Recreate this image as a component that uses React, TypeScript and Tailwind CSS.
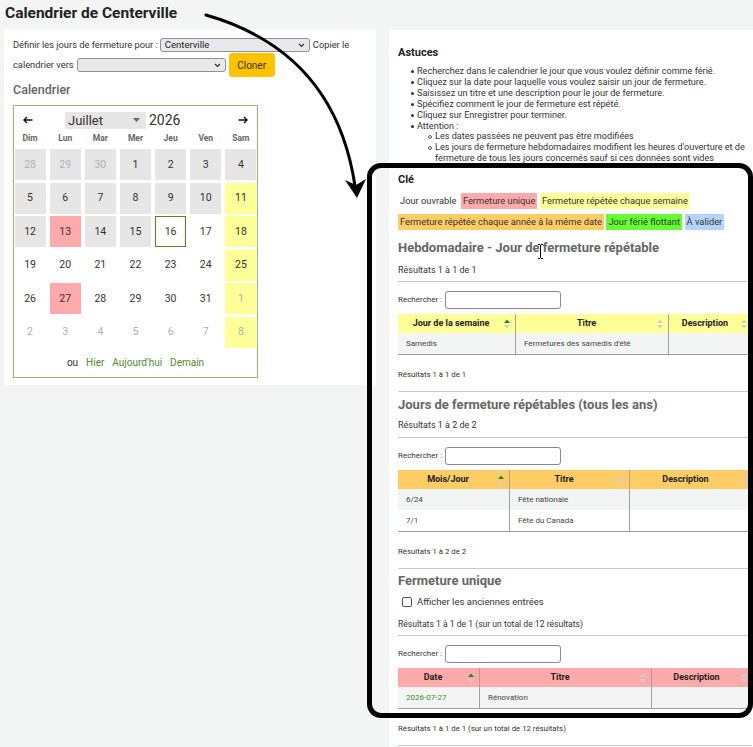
import React from 'react';

type Kind = 'past' | 'unique' | 'weekly' | 'open' | 'today';
type Day = { n: number; kind: Kind; dim?: boolean };

const d = (n: number, kind: Kind, dim = false): Day => ({ n, kind, dim });

const weekdays = ['Dim', 'Lun', 'Mar', 'Mer', 'Jeu', 'Ven', 'Sam'];

const weeks: Day[][] = [
  [d(28, 'past', true), d(29, 'past', true), d(30, 'past', true), d(1, 'past'), d(2, 'past'), d(3, 'past'), d(4, 'past')],
  [d(5, 'past'), d(6, 'past'), d(7, 'past'), d(8, 'past'), d(9, 'past'), d(10, 'past'), d(11, 'weekly')],
  [d(12, 'past'), d(13, 'unique'), d(14, 'past'), d(15, 'past'), d(16, 'today'), d(17, 'open'), d(18, 'weekly')],
  [d(19, 'open'), d(20, 'open'), d(21, 'open'), d(22, 'open'), d(23, 'open'), d(24, 'open'), d(25, 'weekly')],
  [d(26, 'open'), d(27, 'unique'), d(28, 'open'), d(29, 'open'), d(30, 'open'), d(31, 'open'), d(1, 'weekly', true)],
  [d(2, 'open', true), d(3, 'open', true), d(4, 'open', true), d(5, 'open', true), d(6, 'open', true), d(7, 'open', true), d(8, 'weekly', true)],
];

const dayStyle: Record<Kind, string> = {
  past: 'bg-[#e6e6e6]',
  unique: 'bg-[#ffaaaa]',
  weekly: 'bg-[#ffff99]',
  open: '',
  today: 'border border-[#4f8a10]',
};

function Chevron() {
  return (
    <svg width="7" height="5" viewBox="0 0 7 5" className="shrink-0">
      <polyline points="1,1 3.5,3.5 6,1" fill="none" stroke="#333" strokeWidth="1.2" />
    </svg>
  );
}

function FakeSelect({ value, className }: { value?: string; className: string }) {
  return (
    <div
      className={`flex h-[14px] items-center justify-between rounded-[3px] border border-[#8f8f9d] bg-[#e9e9ed] pl-[4px] pr-[4px] text-[9.5px] leading-none text-[#222] ${className}`}
    >
      <span>{value}</span>
      <Chevron />
    </div>
  );
}

function Arrow({ dir }: { dir: 'left' | 'right' }) {
  return (
    <svg width="10" height="8" viewBox="0 0 10 8" className="shrink-0">
      {dir === 'left' ? (
        <path d="M9.5 4H1M4 1L1 4l3 3" fill="none" stroke="#111" strokeWidth="1.4" />
      ) : (
        <path d="M0.5 4H9M6 1l3 3-3 3" fill="none" stroke="#111" strokeWidth="1.4" />
      )}
    </svg>
  );
}

function Calendar() {
  return (
    <div className="mt-[8px] w-[245px] border border-[#8dc26a] pb-[8px] pt-[5px]">
      {/* month navigation */}
      <div className="flex h-[18px] items-center">
        <div className="ml-[9px]">
          <Arrow dir="left" />
        </div>
        <div className="ml-[32px] flex h-[17px] w-[81px] items-center justify-between bg-[#e6e6e6] pl-[3px] pr-[6px]">
          <span className="text-[13px] leading-none text-[#333]">Juillet</span>
          <svg width="7" height="4" viewBox="0 0 7 4">
            <path d="M0 0h7L3.5 4z" fill="#666" />
          </svg>
        </div>
        <span className="ml-[3px] text-[14px] leading-none text-[#333]">2026</span>
        <div className="ml-auto mr-[9px]">
          <Arrow dir="right" />
        </div>
      </div>

      <div className="mx-auto mt-[3px] grid w-[242px] grid-cols-7 gap-x-[4px] text-center text-[8.5px] font-bold leading-[12px] text-[#666]">
        {weekdays.map((w) => (
          <span key={w}>{w}</span>
        ))}
      </div>

      <div className="mx-auto mt-[5px] grid w-[242px] grid-cols-7 gap-x-[4px] gap-y-[2.5px]">
        {weeks.flat().map((day, i) => (
          <div
            key={i}
            className={`flex h-[31px] items-center justify-center text-[10.5px] ${dayStyle[day.kind]} ${day.dim ? 'text-[#b0b0b0]' : 'text-[#333]'}`}
          >
            {day.n}
          </div>
        ))}
      </div>

      <div className="mt-[9px] flex justify-center gap-x-[8px] text-[10px] leading-[12px]">
        <span className="text-[#333]">ou</span>
        <span className="text-[#4a8f2a]">Hier</span>
        <span className="text-[#4a8f2a]">Aujourd'hui</span>
        <span className="text-[#4a8f2a]">Demain</span>
      </div>
    </div>
  );
}

function LeftPanel() {
  return (
    <div className="w-[372px] shrink-0 bg-white pb-[7px] pl-[9px] pt-[9px]">
      <div className="flex h-[14px] items-center text-[9.3px] text-[#333]">
        <span>Définir les jours de fermeture pour :</span>
        <FakeSelect value="Centerville" className="ml-[2px] w-[150px]" />
        <span className="ml-[3px]">Copier le</span>
      </div>
      <div className="mt-[1px] flex h-[24px] items-center text-[9.3px] text-[#333]">
        <span>calendrier vers</span>
        <FakeSelect className="ml-[3px] w-[149px]" />
        <button className="ml-[3px] h-[24px] w-[46px] rounded-[3px] bg-[#ffc300] text-[10px] text-[#333]">Cloner</button>
      </div>
      <h3 className="mt-[5px] text-[12.5px] font-medium leading-[15px] text-[#666]">Calendrier</h3>
      <Calendar />
    </div>
  );
}

function SortIcon({ active }: { active?: boolean }) {
  return (
    <svg width="6" height="10" viewBox="0 0 6 10" className="mr-[5px] shrink-0">
      <path d="M3 0.5L6 4H0z" fill={active ? '#2e7d32' : '#cfcfcf'} />
      <path d="M0 6h6L3 9.5z" fill="#cfcfcf" />
    </svg>
  );
}

type Col = { label: string; w: string };

function DataTable({ head, cols, rows, link }: { head: string; cols: Col[]; rows: string[][]; link?: boolean }) {
  return (
    <div className="mt-[5px] w-[354px] border-b border-[#a0a0a0]">
      <div className={`flex h-[19px] ${head}`}>
        {cols.map((c, i) => (
          <div key={c.label} className={`flex items-center ${c.w} ${i < cols.length - 1 ? 'border-r border-[#a0a0a0]' : ''}`}>
            <span className="flex-1 text-center text-[9px] font-bold text-[#222]">{c.label}</span>
            <SortIcon active={i === 0} />
          </div>
        ))}
      </div>
      {rows.map((r, ri) => (
        <div key={ri} className={`flex h-[21px] ${ri % 2 === 0 ? 'bg-[#f3f4f4]' : 'bg-white'}`}>
          {cols.map((c, i) => (
            <div
              key={c.label}
              className={`flex items-center px-[8px] text-[8px] ${c.w} ${i < cols.length - 1 ? 'border-r border-[#a0a0a0]' : ''} ${link && i === 0 ? 'text-[#3d8a2e]' : 'text-[#444]'}`}
            >
              {r[i]}
            </div>
          ))}
        </div>
      ))}
    </div>
  );
}

function SearchRow() {
  return (
    <div className="mt-[9px] flex items-center">
      <span className="text-[8px] text-[#333]">Rechercher :</span>
      <div className="ml-[3px] h-[18px] w-[116px] rounded-[3px] border border-[#8a8a8a] bg-white" />
    </div>
  );
}

const Rule = ({ mt }: { mt: string }) => <div className={`h-px w-[354px] bg-[#c8c8c8] ${mt}`} />;

const tips = [
  'Recherchez dans le calendrier le jour que vous voulez définir comme férié.',
  'Cliquez sur la date pour laquelle vous voulez saisir un jour de fermeture.',
  'Saisissez un titre et une description pour le jour de fermeture.',
  'Spécifiez comment le jour de fermeture est répété.',
  'Cliquez sur Enregistrer pour terminer.',
];

function RightPanel() {
  return (
    <div className="mt-[1px] w-[372px] shrink-0 bg-white px-[9px] pb-[20px] pt-[16px]">
      <h4 className="text-[11px] font-bold leading-[14px] text-[#222]">Astuces</h4>
      <ul className="ml-[13px] mt-[6px] text-[9.1px] leading-[10.9px] text-[#333]">
        {tips.map((t) => (
          <li key={t} className="flex">
            <span className="mr-[3px] mt-[4px] size-[3px] shrink-0 rounded-full bg-[#333]" />
            <span className="whitespace-nowrap">{t}</span>
          </li>
        ))}
        <li className="flex">
          <span className="mr-[3px] mt-[4px] size-[3px] shrink-0 rounded-full bg-[#333]" />
          <div>
            <span>Attention :</span>
            <ul className="ml-[11px]">
              <li className="flex">
                <span className="mr-[3px] mt-[3.5px] size-[4px] shrink-0 rounded-full border border-[#555]" />
                <span className="whitespace-nowrap">Les dates passées ne peuvent pas être modifiées</span>
              </li>
              <li className="flex">
                <span className="mr-[3px] mt-[3.5px] size-[4px] shrink-0 rounded-full border border-[#555]" />
                <span className="whitespace-nowrap">
                  Les jours de fermeture hebdomadaires modifient les heures d'ouverture et de
                  <br />
                  fermeture de tous les jours concernés sauf si ces données sont vides
                </span>
              </li>
            </ul>
          </div>
        </li>
      </ul>

      <h4 className="mt-[9px] text-[11px] font-bold leading-[14px] text-[#222]">Clé</h4>
      <div className="mt-[6px] flex gap-x-[2.5px] text-[9.3px] leading-[16px] text-[#333]">
        <span className="px-[2px]">Jour ouvrable</span>
        <span className="bg-[#ffaaaa] px-[2px]">Fermeture unique</span>
        <span className="bg-[#ffff99] px-[2px]">Fermeture répétée chaque semaine</span>
      </div>
      <div className="mt-[5px] flex gap-x-[2.5px] text-[9.3px] leading-[16px] text-[#333]">
        <span className="bg-[#ffcc66] px-[2px]">Fermeture répétée chaque année à la même date</span>
        <span className="bg-[#66ff33] px-[2px]">Jour férié flottant</span>
        <span className="bg-[#b3d4ff] px-[2px]">À valider</span>
      </div>

      {/* weekly closings */}
      <h3 className="mt-[10px] text-[13px] font-bold leading-[16px] text-[#666]">Hebdomadaire - Jour de fermeture répétable</h3>
      <p className="mt-[8px] text-[9px] leading-[12px]">Résultats 1 à 1 de 1</p>
      <Rule mt="mt-[5px]" />
      <SearchRow />
      <DataTable
        head="bg-[#ffff99]"
        cols={[
          { label: 'Jour de la semaine', w: 'w-[118px]' },
          { label: 'Titre', w: 'w-[153px]' },
          { label: 'Description', w: 'flex-1' },
        ]}
        rows={[['Samedis', "Fermetures des samedis d'été", '']]}
      />
      <p className="mt-[15px] text-[7.8px] leading-[10px]">Résultats 1 à 1 de 1</p>
      <Rule mt="mt-[11px]" />

      {/* yearly closings */}
      <h3 className="mt-[5px] text-[13px] font-bold leading-[16px] text-[#666]">Jours de fermeture répétables (tous les ans)</h3>
      <p className="mt-[6px] text-[9px] leading-[12px]">Résultats 1 à 2 de 2</p>
      <Rule mt="mt-[6px]" />
      <SearchRow />
      <DataTable
        head="bg-[#ffcc66]"
        cols={[
          { label: 'Mois/Jour', w: 'w-[112px]' },
          { label: 'Titre', w: 'w-[120px]' },
          { label: 'Description', w: 'flex-1' },
        ]}
        rows={[
          ['6/24', 'Fête nationale', ''],
          ['7/1', 'Fête du Canada', ''],
        ]}
      />
      <p className="mt-[15px] text-[7.8px] leading-[10px]">Résultats 1 à 2 de 2</p>
      <Rule mt="mt-[11px]" />

      {/* single closings */}
      <h3 className="mt-[4px] text-[13px] font-bold leading-[16px] text-[#666]">Fermeture unique</h3>
      <label className="mt-[7px] flex h-[12px] items-center pl-[4px] text-[9.5px]">
        <span className="size-[10px] rounded-[2px] border border-[#555] bg-white" />
        <span className="ml-[5px]">Afficher les anciennes entrées</span>
      </label>
      <p className="mt-[10px] text-[8.6px] leading-[12px]">Résultats 1 à 1 de 1 (sur un total de 12 résultats)</p>
      <Rule mt="mt-[5px]" />
      <SearchRow />
      <DataTable
        head="bg-[#ffaaaa]"
        link
        cols={[
          { label: 'Date', w: 'w-[82px]' },
          { label: 'Titre', w: 'w-[172px]' },
          { label: 'Description', w: 'flex-1' },
        ]}
        rows={[['2026-07-27', 'Rénovation', '']]}
      />
      <p className="mt-[15px] text-[7.8px] leading-[10px]">Résultats 1 à 1 de 1 (sur un total de 12 résultats)</p>
      <Rule mt="mt-[11px]" />
    </div>
  );
}

function Callout() {
  return (
    <>
      <svg className="pointer-events-none absolute left-0 top-0" width="753" height="747">
        <path d="M206 15 Q 335 52 355 186" stroke="#000" strokeWidth="3" fill="none" strokeLinecap="round" />
        <path d="M357 198 L345 180 L356 185 L366 179 Z" fill="#000" />
      </svg>
      <div className="pointer-events-none absolute left-[367px] top-[163px] h-[555px] w-[386px] rounded-[14px] border-[5px] border-black" />
      {/* text cursor */}
      <svg className="pointer-events-none absolute left-[536px] top-[243px]" width="9" height="17" viewBox="0 0 9 17">
        <path d="M2 1.5h2M5 1.5h2M4.5 2v13M2 15.5h2M5 15.5h2" stroke="#fff" strokeWidth="2.6" fill="none" />
        <path d="M2 1.5h2M5 1.5h2M4.5 2v13M2 15.5h2M5 15.5h2" stroke="#000" strokeWidth="1" fill="none" />
      </svg>
    </>
  );
}

export default function App() {
  return (
    <div className="relative h-[747px] w-[753px] overflow-hidden bg-[#f3f4f4] font-[Roboto,sans-serif] text-[#333]">
      <h1 className="pl-[5px] pt-[4px] text-[15.5px] font-bold leading-[18px] text-[#222]">Calendrier de Centerville</h1>
      <div className="mt-[7px] flex items-start gap-x-[13px] pl-[4px]">
        <LeftPanel />
        <RightPanel />
      </div>
      <Callout />
    </div>
  );
}
